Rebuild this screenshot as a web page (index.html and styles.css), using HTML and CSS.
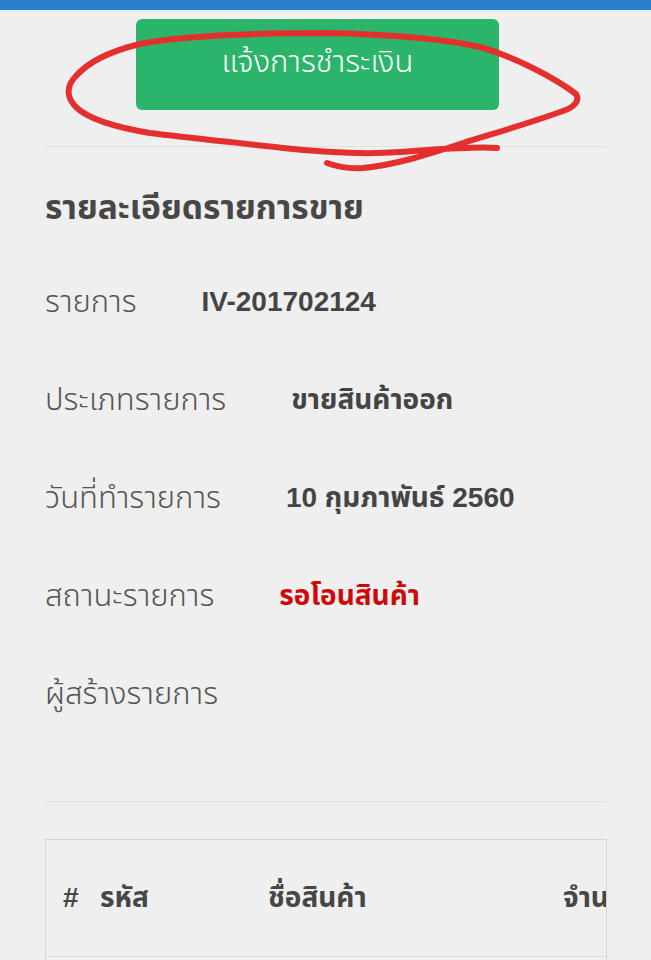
FILE: index.html
```html
<!DOCTYPE html>
<html lang="th">
<head>
<meta charset="utf-8">
<title>รายละเอียดรายการขาย</title>
<link rel="stylesheet" href="styles.css">
</head>
<body>
<div class="topbar"></div>
<main class="page">
  <div class="actions">
    <button class="pay-btn">แจ้งการชำระเงิน</button>
  </div>
  <hr class="divider">
  <h1 class="title">รายละเอียดรายการขาย</h1>
  <div class="details">
    <div class="row"><span class="label">รายการ</span><span class="value">IV-201702124</span></div>
    <div class="row"><span class="label">ประเภทรายการ</span><span class="value">ขายสินค้าออก</span></div>
    <div class="row"><span class="label">วันที่ทำรายการ</span><span class="value">10 กุมภาพันธ์ 2560</span></div>
    <div class="row"><span class="label">สถานะรายการ</span><span class="value status">รอโอนสินค้า</span></div>
    <div class="row"><span class="label">ผู้สร้างรายการ</span><span class="value"></span></div>
  </div>
  <hr class="divider divider-low">
  <div class="table">
    <div class="thead">
      <span class="col-num">#</span>
      <span class="col-code">รหัส</span>
      <span class="col-name">ชื่อสินค้า</span>
      <span class="col-qty">จำนวน</span>
    </div>
  </div>
</main>
<svg class="annotation" width="651" height="200" viewBox="0 0 651 200">
  <path d="M497,148 C475,146 445,149 400,152 C360,155 320,152 283,148 C240,143 190,138 150,133 C120,128 90,120 77,108 C66,98 66,86 76,76 C90,60 115,50 140,44 C180,36 250,33 330,33 C400,35 450,40 480,47 C515,57 555,78 576,94 C580,100 575,107 563,111 C530,123 495,133 463,143 C430,154 395,165 363,168 C348,169 335,166 327,163" fill="none" stroke="#e3302f" stroke-width="6" stroke-linecap="round" stroke-linejoin="round"/>
</svg>
</body>
</html>
```
FILE: styles.css
```css
html, body {
  margin: 0;
  padding: 0;
  background: #efefef;
}
body {
  position: relative;
  font-family: "Liberation Sans", "Noto Sans Thai", "Noto Sans", sans-serif;
  color: #454545;
}
.topbar {
  height: 10px;
  background: #2b7fce;
  border-bottom: 1px solid #c9f3f5;
}
.page {
  padding: 0 44px 0 45px;
}
.actions {
  padding: 8px 0 0 91px;
}
.pay-btn {
  display: block;
  width: 363px;
  height: 91px;
  border: none;
  border-radius: 6px;
  background: #2bb56b;
  color: #ffffff;
  font-family: inherit;
  font-weight: 300;
  font-size: 31px;
  line-height: 42px;
  padding: 0 0 6px;
  margin: 0;
}
.divider {
  border: none;
  border-top: 1px solid #e1e1e1;
  margin: 36px 0 0;
  height: 0;
}
.title {
  margin: 37px 0 0;
  font-size: 33.5px;
  line-height: 48px;
  font-weight: 700;
  color: #474747;
}
.details {
  margin-top: 21px;
}
.row {
  display: flex;
  align-items: center;
  height: 98px;
  gap: 65px;
}
.label {
  font-size: 31px;
  font-weight: 300;
  color: #555555;
}
.value {
  font-size: 28px;
  font-weight: 700;
  color: #444444;
}
.status {
  color: #cc0a0a;
}
.divider-low {
  margin-top: 58px;
}
.table {
  margin-top: 37px;
  border: 1px solid #d6d6d6;
  border-bottom: none;
  height: 130px;
  overflow: hidden;
}
.thead {
  display: flex;
  align-items: center;
  height: 116px;
  border-bottom: 1px solid #dcdcdc;
  padding-left: 17px;
  white-space: nowrap;
  font-size: 28px;
  font-weight: 700;
  color: #464646;
}
.thead span {
  flex: none;
}
.col-num { width: 37px; }
.col-code { width: 168px; }
.col-name { width: 295px; }
.annotation {
  position: absolute;
  left: 0;
  top: 0;
  pointer-events: none;
}
```
